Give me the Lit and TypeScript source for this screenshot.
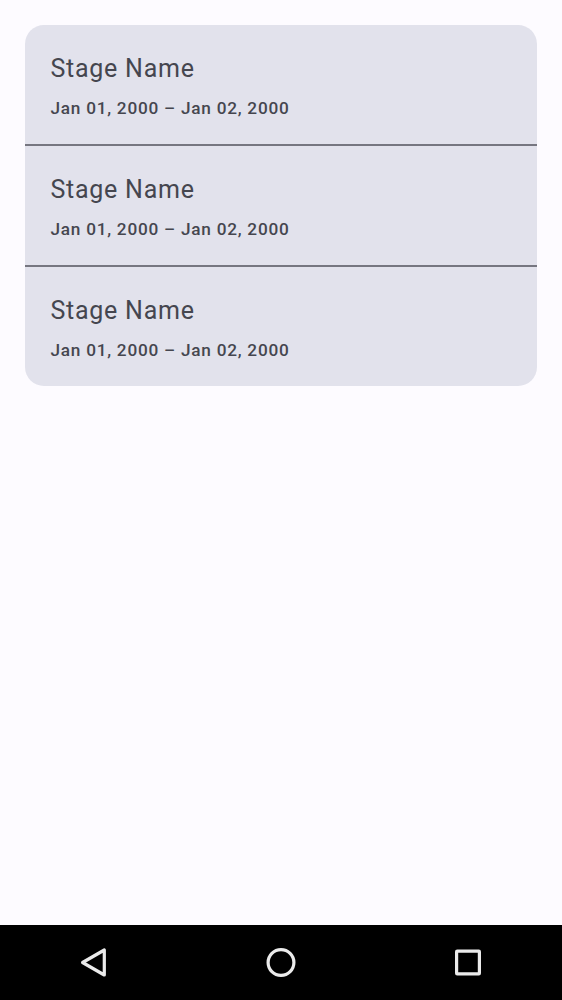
import { LitElement, html, css } from "lit";
import { customElement } from "lit/decorators.js";

interface Stage { name: string; dates: string; }

@customElement("app-root")
class AppRoot extends LitElement {
  static styles = css`
    :host { display: flex; flex-direction: column; height: 1000px; background: #fdfbff; font-family: Roboto, sans-serif; color: #45464f; }
    main { flex: 1; padding: 25px; }
    .card { border-radius: 19px; overflow: hidden; background: #e2e2ec; }
    .row { box-sizing: border-box; height: 119px; padding: 25px 25.4px 0; }
    .row + .row { height: 121px; border-top: 2px solid #767680; }
    .name { font-size: 25px; line-height: 37px; letter-spacing: 0.76px; }
    .dates { font-size: 17.2px; line-height: 25px; font-weight: 500; letter-spacing: 0.77px; margin-top: 9px; }
    nav { height: 75px; background: #000; display: flex; align-items: center; justify-content: space-between; padding: 0 69px; }
    svg { width: 50px; height: 50px; fill: none; stroke: #ebebeb; stroke-width: 3.2; stroke-linejoin: round; display: block; }
  `;
  private stages: Stage[] = Array.from({ length: 3 }, () => ({ name: "Stage Name", dates: "Jan 01, 2000 – Jan 02, 2000" }));
  render() {
    return html`
      <main><div class="card">
        ${this.stages.map((s) => html`<div class="row"><div class="name">${s.name}</div><div class="dates">${s.dates}</div></div>`)}
      </div></main>
      <nav>
        <svg viewBox="0 0.5 50 50"><path d="M35.3 12.5V37.5L13.6 25Z" /></svg>
        <svg viewBox="0 0.5 50 50"><circle cx="25" cy="25" r="12.9" /></svg>
        <svg viewBox="0 0.5 50 50"><rect x="13.6" y="13.6" width="22.8" height="22.8" rx="0.6" /></svg>
      </nav>`;
  }
}
